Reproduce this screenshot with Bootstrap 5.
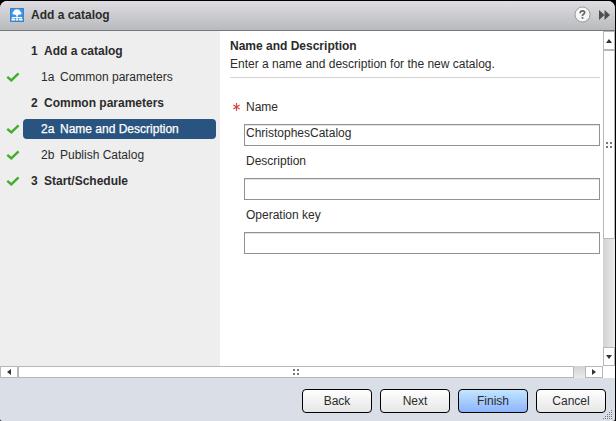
<!DOCTYPE html>
<html lang="en">
<head>
<meta charset="utf-8">
<title>Add a catalog</title>
<link href="https://cdn.jsdelivr.net/npm/bootstrap@5.3.0/dist/css/bootstrap.min.css" rel="stylesheet">
<style>
html,body{height:421px;overflow:hidden}
body{background:#000;font:12px/16px "Liberation Sans",Arial,sans-serif;color:#2b2b2b}
.wizard{width:615px;height:420px;margin-top:1px;border-radius:7px 7px 2px 2px;background:#dadee6}
.titlebar{height:30px;padding:0 5px 2px 10px;background:linear-gradient(#dedee2,#b9babd);border-bottom:1px solid #777}
.titlebar .caption{margin-left:7px}
.main{height:335px;background:#fff}
.steps{width:220px;background:#eee;padding-top:10px;padding-right:4px}
.step{height:20px;margin-bottom:6px}
.tick{width:23px;padding-left:6px}
.step-label{height:20px;line-height:20px;border-radius:4px;padding-left:8px;white-space:pre}
.step-label.sub{padding-left:18px}
.num{width:13px}
.sub .num{width:19px}
.step-label.current{background:#2a5480;color:#fff;-webkit-text-stroke:.25px #fff}
.pane{padding:6px 3px 0 10px}
.intro{border-bottom:1px solid #d2d2d2;height:41px;line-height:18px}
.fields{padding-top:21px}
.field-label{height:16px;line-height:16px;margin-bottom:9px}
.req{width:16px;padding-left:3px}
.box{height:22px;margin:0 0 7px 14px;border:1px solid #929292;border-radius:0;box-shadow:inset 0 1px #e2e2e2;padding:0 1px 4px;font-size:12px;line-height:16px;color:#2b2b2b;background:#fff;width:356px}
.vbar{width:12px;background:linear-gradient(90deg,#d2d2d2,#eaeaea)}
.hbar{height:12px;width:603px;background:linear-gradient(#d2d2d2,#eaeaea)}
.bit{background:#fff;border:1px solid #b8b8b8}
.vbar .bit{width:12px}
.up{height:19px}.vthumb{height:189px}.down{height:19px}
.hbar .bit{height:12px}
.left{width:18px}.hthumb{width:556px}.right{width:18px}
.actions{height:42px;padding:0 9px 0 0;gap:8px}
.act{width:70px;height:24px;padding:0;border:1px solid #000;border-radius:4px;font-size:12px;line-height:20px;color:#2b2b2b;background:linear-gradient(#fff,#e6e6e6)}
.act.primary{background:linear-gradient(#c2e6ff,#8db4fc)}
.grip{position:absolute;right:2px;bottom:1px}
svg{display:block;flex:none}
</style>
<script src="https://cdn.jsdelivr.net/npm/bootstrap@5.3.0/dist/js/bootstrap.bundle.min.js"></script>
</head>
<body>
<div class="wizard position-relative overflow-hidden">
 <header class="titlebar d-flex align-items-center">
  <svg width="14" height="14" viewBox="0 0 14 14"><rect width="14" height="14" fill="#3c93e4"/><path d="M.5.5h13v13H.5z" fill="none" stroke="#3585cf"/><path d="M3.300 6.500a1.700 1.700 0 0 1 .3-3A3.400 2.600 0 0 1 10.300 3.500a1.700 1.700 0 0 1 .4 3L9 6.500 7 8.300 5 6.500z" fill="#fff"/><path d="M7 7.500v3M2 9.500h10" stroke="#fff"/><path d="M1.500 10.500h3.500v2H1.500zM9 10.500h3.500v2H9zM5.800 10.500h2.400v2H5.800z" fill="#fff"/></svg>
  <b class="caption me-auto">Add a catalog</b>
  <svg width="17" height="17" viewBox="0 0 17 17"><circle cx="8.500" cy="8.500" r="7.500" fill="#f7f7f7" stroke="#989898"/><path d="M6.300 7.200V6.500Q6.300 4.800 8.500 4.800T10.700 6.600Q10.700 7.500 9.500 8.200T8.500 10M8.500 11v1.800" fill="none" stroke="#666" stroke-width="1.700"/></svg>
  <svg class="ms-2" width="11" height="10" viewBox="0 0 11 10"><path d="M0 0L5.500 5 0 10zM5.500 0L11 5 5.500 10z" fill="#4d4d4d"/></svg>
 </header>
 <div class="main d-flex">
  <nav class="steps">
   <div class="step d-flex align-items-center"><span class="tick"></span><b class="step-label d-flex flex-fill"><span class="num">1</span>Add a catalog</b></div>
   <div class="step d-flex align-items-center"><span class="tick"><svg width="14" height="10" viewBox="0 0 14 10"><path d="M1.300 4.800l4 3.500L12.600 1.300" fill="none" stroke="#3faf2a" stroke-width="2.400"/></svg></span><span class="step-label sub d-flex flex-fill"><span class="num">1a</span>Common parameters</span></div>
   <div class="step d-flex align-items-center"><span class="tick"></span><b class="step-label d-flex flex-fill"><span class="num">2</span>Common parameters</b></div>
   <div class="step d-flex align-items-center"><span class="tick"><svg width="14" height="10" viewBox="0 0 14 10"><path d="M1.300 4.800l4 3.500L12.600 1.300" fill="none" stroke="#3faf2a" stroke-width="2.400"/></svg></span><span class="step-label sub current d-flex flex-fill"><span class="num">2a</span>Name and Description</span></div>
   <div class="step d-flex align-items-center"><span class="tick"><svg width="14" height="10" viewBox="0 0 14 10"><path d="M1.300 4.800l4 3.500L12.600 1.300" fill="none" stroke="#3faf2a" stroke-width="2.400"/></svg></span><span class="step-label sub d-flex flex-fill"><span class="num">2b</span>Publish Catalog</span></div>
   <div class="step d-flex align-items-center"><span class="tick"><svg width="14" height="10" viewBox="0 0 14 10"><path d="M1.300 4.800l4 3.500L12.600 1.300" fill="none" stroke="#3faf2a" stroke-width="2.400"/></svg></span><b class="step-label d-flex flex-fill"><span class="num">3</span>Start/Schedule</b></div>
  </nav>
  <main class="pane flex-fill">
   <div class="intro"><b class="d-block">Name and Description</b><span>Enter a name and description for the new catalog.</span></div>
   <form class="fields">
    <label class="field-label d-flex align-items-center" for="f1"><span class="req"><svg width="7" height="8" viewBox="0 0 7 8"><path d="M3.500 0v8M.3 2l6.400 4M.3 6l6.400-4" stroke="#d9433f" stroke-width="1.200"/></svg></span>Name</label>
    <input class="box form-control" id="f1" value="ChristophesCatalog">
    <label class="field-label d-flex" for="f2"><span class="req"></span>Description</label>
    <input class="box form-control" id="f2">
    <label class="field-label d-flex" for="f3"><span class="req"></span>Operation key</label>
    <input class="box form-control" id="f3">
   </form>
  </main>
  <div class="vbar d-flex flex-column">
   <div class="bit up d-flex align-items-center justify-content-center"><svg width="6" height="4"><path d="M0 4L3 0l3 4z" fill="#333"/></svg></div>
   <div class="bit vthumb d-flex align-items-center justify-content-center"><svg width="6" height="6"><path d="M0 0h2v2H0zM4 0h2v2H4zM0 4h2v2H0zM4 4h2v2H4z" fill="#777"/></svg></div>
   <div class="bit down mt-auto d-flex align-items-center justify-content-center"><svg width="6" height="4"><path d="M0 0h6L3 4z" fill="#333"/></svg></div>
  </div>
 </div>
 <div class="bg-white"><div class="hbar d-flex">
  <div class="bit left d-flex align-items-center justify-content-center"><svg width="4" height="6"><path d="M4 0v6L0 3z" fill="#333"/></svg></div>
  <div class="bit hthumb d-flex align-items-center justify-content-center"><svg width="6" height="6"><path d="M0 0h2v2H0zM4 0h2v2H4zM0 4h2v2H0zM4 4h2v2H4z" fill="#777"/></svg></div>
  <div class="bit right ms-auto d-flex align-items-center justify-content-center"><svg width="4" height="6"><path d="M0 0v6l4-3z" fill="#333"/></svg></div>
 </div></div>
 <footer class="actions d-flex align-items-center justify-content-end pt-1">
  <button class="btn act">Back</button><button class="btn act">Next</button><button class="btn act primary">Finish</button><button class="btn act">Cancel</button>
 </footer>
 <svg class="grip" width="10" height="10"><path d="M8 0h1v1h-1zM6 2h1v1h-1zM8 2h1v1h-1zM4 4h1v1h-1zM6 4h1v1h-1zM8 4h1v1h-1zM2 6h1v1h-1zM4 6h1v1h-1zM6 6h1v1h-1zM8 6h1v1h-1zM0 8h1v1h-1zM2 8h1v1h-1zM4 8h1v1h-1zM6 8h1v1h-1zM8 8h1v1h-1z" fill="#777"/></svg>
</div>
</body>
</html>
